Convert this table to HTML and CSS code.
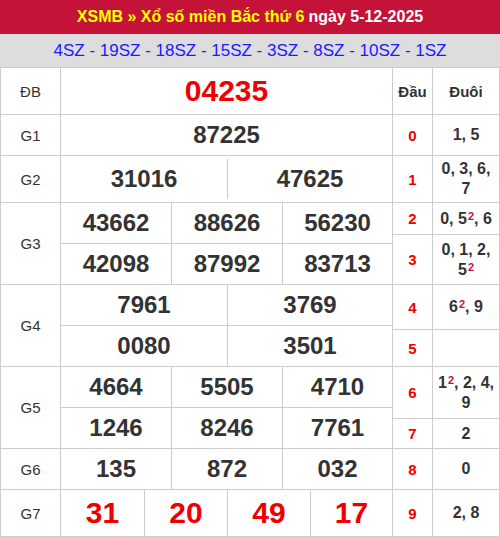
FILE: index.html
```html
<!DOCTYPE html>
<html lang="vi">
<head>
<meta charset="utf-8">
<title>XSMB</title>
<link rel="stylesheet" href="styles.css">
</head>
<body>
<div class="page">
  <div class="title"><span class="hl">XSMB » Xổ số miền Bắc thứ 6</span> ngày 5-12-2025</div>
  <div class="codes">4SZ - 19SZ - 18SZ - 15SZ - 3SZ - 8SZ - 10SZ - 1SZ</div>
  <div class="board">
    <div class="prizes">
      <div class="label r47">ĐB</div>
      <div class="cell r47 big red">04235</div>

      <div class="label r41">G1</div>
      <div class="cell r41 num">87225</div>

      <div class="label r47">G2</div>
      <div class="g2">
        <div class="g2cell num">31016</div>
        <div class="g2div"></div>
        <div class="g2cell num">47625</div>
      </div>

      <div class="label r82">G3</div>
      <div class="sub c3">
        <div class="cell num">43662</div>
        <div class="cell num">88626</div>
        <div class="cell num">56230</div>
        <div class="cell num">42098</div>
        <div class="cell num">87992</div>
        <div class="cell num">83713</div>
      </div>

      <div class="label r82">G4</div>
      <div class="sub c2">
        <div class="cell num">7961</div>
        <div class="cell num">3769</div>
        <div class="cell num">0080</div>
        <div class="cell num">3501</div>
      </div>

      <div class="label r82">G5</div>
      <div class="sub c3">
        <div class="cell num">4664</div>
        <div class="cell num">5505</div>
        <div class="cell num">4710</div>
        <div class="cell num">1246</div>
        <div class="cell num">8246</div>
        <div class="cell num">7761</div>
      </div>

      <div class="label r41">G6</div>
      <div class="sub c3 one">
        <div class="cell num">135</div>
        <div class="cell num">872</div>
        <div class="cell num">032</div>
      </div>

      <div class="label r47">G7</div>
      <div class="sub c4">
        <div class="cell big red">31</div>
        <div class="cell big red">20</div>
        <div class="cell big red">49</div>
        <div class="cell big red">17</div>
      </div>
    </div>

    <div class="heads">
      <div class="cell hd">Đầu</div><div class="cell hd">Đuôi</div>
      <div class="cell dau">0</div><div class="cell duoi"><span>1, 5</span></div>
      <div class="cell dau">1</div><div class="cell duoi"><span>0, 3, 6, 7</span></div>
      <div class="cell dau">2</div><div class="cell duoi"><span>0, 5<sup>2</sup>, 6</span></div>
      <div class="cell dau">3</div><div class="cell duoi"><span>0, 1, 2, <span class="nw">5<sup>2</sup></span></span></div>
      <div class="cell dau">4</div><div class="cell duoi"><span>6<sup>2</sup>, 9</span></div>
      <div class="cell dau">5</div><div class="cell duoi"></div>
      <div class="cell dau">6</div><div class="cell duoi"><span>1<sup>2</sup>, 2, 4, <span class="nw">9</span></span></div>
      <div class="cell dau">7</div><div class="cell duoi"><span>2</span></div>
      <div class="cell dau">8</div><div class="cell duoi"><span>0</span></div>
      <div class="cell dau">9</div><div class="cell duoi"><span>2, 8</span></div>
    </div>
  </div>
</div>
</body>
</html>
```

FILE: styles.css
```css
* { box-sizing: border-box; }
body {
  margin: 0;
  font-family: "Liberation Sans", Arial, sans-serif;
  color: #333;
  background: #fff;
}
.page { width: 500px; }
.title {
  height: 34px;
  background: #c41239;
  color: #fff;
  font-weight: bold;
  font-size: 16px;
  display: flex;
  align-items: center;
  justify-content: center;
}
.title .hl { color: #ffff00; margin-right: 4px; }
.codes {
  height: 33px;
  background: #dddddd;
  color: #1a1aff;
  font-size: 17px;
  display: flex;
  align-items: center;
  justify-content: center;
}
.board {
  display: flex;
  border-top: 1px solid #ccc;
  border-left: 1px solid #ccc;
}
.cell, .label {
  border-right: 1px solid #ccc;
  border-bottom: 1px solid #ccc;
  display: flex;
  align-items: center;
  justify-content: center;
  text-align: center;
}
.prizes {
  display: grid;
  grid-template-columns: 60px 332px;
  grid-template-rows: 47px 41px 47px 82px 82px 82px 41px 47px;
}
.label { font-size: 15px; }
.num { font-size: 24px; font-weight: bold; }
.big { font-size: 30px; font-weight: bold; }
.red { color: #ee0000; }
.g2 {
  display: flex;
  align-items: center;
  border-right: 1px solid #ccc;
  border-bottom: 1px solid #ccc;
}
.g2cell {
  height: 100%;
  display: flex;
  align-items: center;
  justify-content: center;
}
.g2cell:first-child { width: 166px; }
.g2cell:last-child { flex: 1; }
.g2div { width: 1px; height: 40px; background: #ccc; }
.sub { display: grid; grid-template-rows: 41px 41px; }
.sub.one { grid-template-rows: 41px; }
.c2 { grid-template-columns: 167px 165px; }
.c3 { grid-template-columns: 111px 111px 110px; }
.c4 { grid-template-columns: 84px 83px 83px 82px; grid-template-rows: 47px; }
.heads {
  display: grid;
  grid-template-columns: 40px 67px;
  grid-template-rows: 47px 41px 47px 32px 50px 45px 37px 52px 30px 41px 47px;
}
.hd { font-size: 15px; font-weight: bold; }
.dau { font-size: 15px; font-weight: bold; color: #ee0000; }
.duoi {
  font-size: 16px;
  font-weight: bold;
  line-height: 20px;
  padding: 0 4px;
}
.nw { white-space: nowrap; }
.duoi sup {
  font-size: 11px;
  color: #c41239;
  line-height: 0;
  vertical-align: 4px;
  margin-left: 1px;
}
```
